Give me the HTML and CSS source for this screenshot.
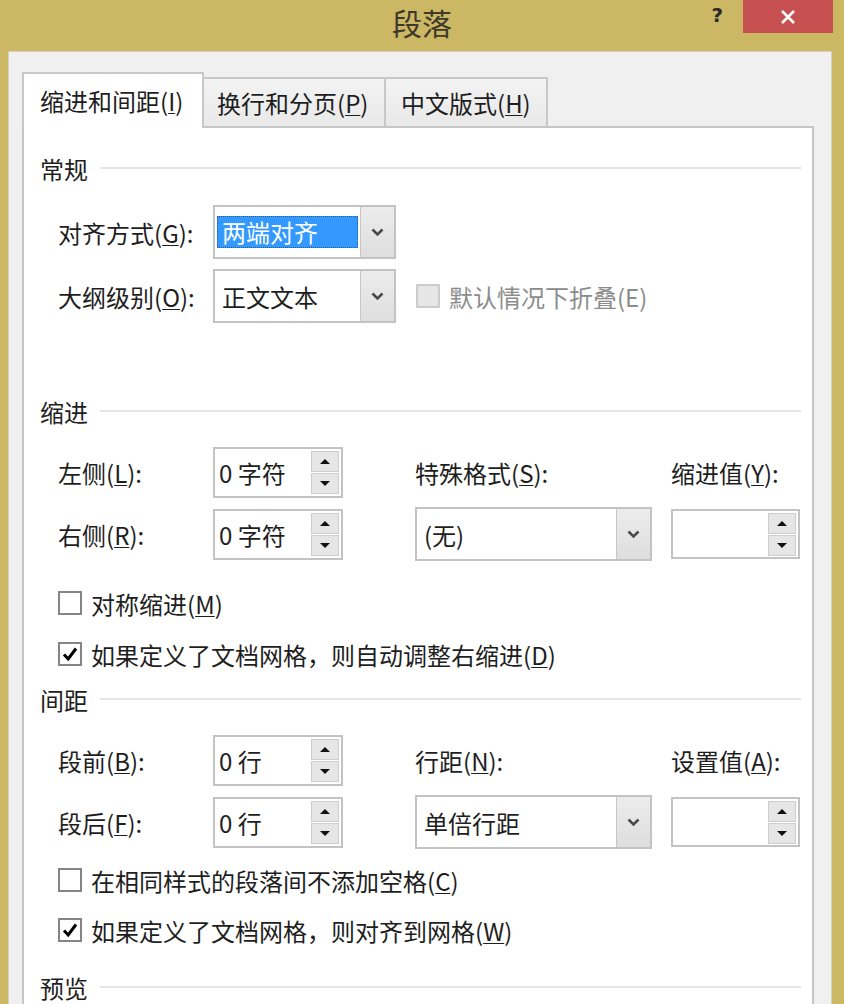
FILE: index.html
```html
<!DOCTYPE html>
<html lang="zh-CN">
<head>
<meta charset="UTF-8" />
<title>段落</title>
<link rel="stylesheet" href="styles.css">
</head>
<body>

  <!-- Title bar -->
  <header class="titlebar">
    <h1 class="title">段落</h1>
    <div class="controls">
      <span class="help">?</span>
      <span class="close">
        <svg width="16" height="16" viewBox="0 0 16 16"><path d="M2 2 L14 14 M14 2 L2 14" stroke="#fff" stroke-width="2.6" fill="none"/></svg>
      </span>
    </div>
  </header>

  <!-- Dialog body -->
  <div class="client">
    <div class="tabs">
      <div class="tab active"><span>缩进和间距(<u>I</u>)</span></div>
      <div class="tab"><span>换行和分页(<u>P</u>)</span></div>
      <div class="tab last"><span>中文版式(<u>H</u>)</span></div>
    </div>

    <div class="panel">
      <!-- 常规 -->
      <div class="group">常规</div>
      <div class="rows general">
        <span class="label">对齐方式(<u>G</u>):</span>
        <div class="select wide">
          <div class="value"><span class="picked">两端对齐</span></div>
          <div class="arrow"><svg width="13" height="9" viewBox="0 0 13 9"><path d="M1.5 1.5 L6.5 6.5 L11.5 1.5" stroke="#4a4a4a" stroke-width="2.6" fill="none"/></svg></div>
        </div>
        <span></span><span></span>

        <span class="label">大纲级别(<u>O</u>):</span>
        <div class="select wide">
          <div class="value">正文文本</div>
          <div class="arrow"><svg width="13" height="9" viewBox="0 0 13 9"><path d="M1.5 1.5 L6.5 6.5 L11.5 1.5" stroke="#4a4a4a" stroke-width="2.6" fill="none"/></svg></div>
        </div>
        <label class="check disabled span2"><span class="box"></span><span>默认情况下折叠(E)</span></label>
      </div>

      <!-- 缩进 -->
      <div class="group gap-indent">缩进</div>
      <div class="rows pair">
        <span class="label">左侧(<u>L</u>):</span>
        <div class="spin">
          <div class="value">0 字符</div>
          <div class="btns"><span class="up"></span><span class="down"></span></div>
        </div>
        <span class="label">特殊格式(<u>S</u>):</span>
        <span class="label">缩进值(<u>Y</u>):</span>

        <span class="label">右侧(<u>R</u>):</span>
        <div class="spin">
          <div class="value">0 字符</div>
          <div class="btns"><span class="up"></span><span class="down"></span></div>
        </div>
        <div class="select mid">
          <div class="value">(无)</div>
          <div class="arrow"><svg width="13" height="9" viewBox="0 0 13 9"><path d="M1.5 1.5 L6.5 6.5 L11.5 1.5" stroke="#4a4a4a" stroke-width="2.6" fill="none"/></svg></div>
        </div>
        <div class="spin small">
          <div class="value"></div>
          <div class="btns"><span class="up"></span><span class="down"></span></div>
        </div>
      </div>
      <div class="checks indent-checks">
        <label class="check"><span class="box"></span><span>对称缩进(<u>M</u>)</span></label>
        <label class="check"><span class="box on"><svg width="18" height="18" viewBox="0 0 18 18"><path d="M3 9.5 L7.2 14 L15 3.5" stroke="#000" stroke-width="3" fill="none"/></svg></span><span>如果定义了文档网格，则自动调整右缩进(<u>D</u>)</span></label>
      </div>

      <!-- 间距 -->
      <div class="group gap-small">间距</div>
      <div class="rows pair">
        <span class="label">段前(<u>B</u>):</span>
        <div class="spin">
          <div class="value">0 行</div>
          <div class="btns"><span class="up"></span><span class="down"></span></div>
        </div>
        <span class="label">行距(<u>N</u>):</span>
        <span class="label">设置值(<u>A</u>):</span>

        <span class="label">段后(<u>F</u>):</span>
        <div class="spin">
          <div class="value">0 行</div>
          <div class="btns"><span class="up"></span><span class="down"></span></div>
        </div>
        <div class="select mid">
          <div class="value">单倍行距</div>
          <div class="arrow"><svg width="13" height="9" viewBox="0 0 13 9"><path d="M1.5 1.5 L6.5 6.5 L11.5 1.5" stroke="#4a4a4a" stroke-width="2.6" fill="none"/></svg></div>
        </div>
        <div class="spin small">
          <div class="value"></div>
          <div class="btns"><span class="up"></span><span class="down"></span></div>
        </div>
      </div>
      <div class="checks spacing-checks">
        <label class="check"><span class="box"></span><span>在相同样式的段落间不添加空格(<u>C</u>)</span></label>
        <label class="check"><span class="box on"><svg width="18" height="18" viewBox="0 0 18 18"><path d="M3 9.5 L7.2 14 L15 3.5" stroke="#000" stroke-width="3" fill="none"/></svg></span><span>如果定义了文档网格，则对齐到网格(<u>W</u>)</span></label>
      </div>

      <!-- 预览 -->
      <div class="group gap-preview">预览</div>
    </div>
  </div>

</body>
</html>
```

FILE: styles.css
```css
/* Window frame */
body {
  margin: 0;
  width: 844px;
  height: 1004px;
  overflow: hidden;
  background: #ccb765;
  font-family: "Noto Sans CJK SC", "Noto Sans", sans-serif;
  color: #1e1e1e;
}
u {
  text-decoration-thickness: 1px;
  text-underline-offset: 2px;
}

/* Title bar */
.titlebar {
  display: grid;
  grid-template-columns: 1fr auto 1fr;
  height: 51px;
}
.title {
  grid-column: 2;
  margin: 0;
  font-size: 30px;
  font-weight: normal;
  line-height: 44px;
  color: #3d3a2b;
}
.controls {
  grid-column: 3;
  justify-self: end;
  display: flex;
  align-items: flex-start;
  gap: 20px;
  padding-right: 11px;
}
.help {
  font: bold 20px "DejaVu Sans", sans-serif;
  line-height: 30px;
  color: #2a2a2a;
}
.close {
  width: 90px;
  height: 33px;
  background: #c75050;
  display: flex;
  align-items: center;
  justify-content: center;
}

/* Client area */
.client {
  margin: 0 12px 0 8px;
  height: 960px;
  background: #f0f0f0;
  border: 1px solid #d6d1bd;
  border-bottom: none;
  padding: 20px 17px 0 13px;
}

/* Tabs */
.tabs {
  display: flex;
  align-items: flex-end;
}
.tab {
  height: 49px;
  box-sizing: border-box;
  display: flex;
  align-items: center;
  padding: 0 0 0 13px;
  font-size: 24px;
  white-space: nowrap;
  background: linear-gradient(#f3f3f3, #e9e9e9);
  border: 2px solid #c8c8c8;
  border-bottom: none;
  border-left: none;
}
.tab.active {
  height: 56px;
  width: 182px;
  margin-bottom: -2px;
  padding: 0 0 2px 16px;
  background: #fff;
  border-left: 2px solid #c8c8c8;
  position: relative;
  z-index: 1;
}
.tab:nth-child(2) { width: 182px; }
.tab.last { width: 162px; padding-left: 15px; }

.panel {
  height: 900px;
  background: #fff;
  border: 2px solid #c6c6c6;
  padding: 26px 11px 0 16px;
}

/* Group headings with rule */
.group {
  display: flex;
  align-items: center;
  gap: 12px;
  height: 28px;
  font-size: 24px;
}
.group::after {
  content: "";
  flex: 1;
  height: 2px;
  background: #e4e4e4;
}
.gap-indent { margin-top: 74px; }
.gap-small { margin-top: 6px; }
.gap-preview { margin-top: 18px; }

/* Form rows */
.rows {
  display: grid;
  grid-template-columns: 155px 202px 256px 129px;
  align-items: center;
  padding-left: 18px;
  font-size: 24px;
  white-space: nowrap;
}
.general {
  margin-top: 23px;
  grid-auto-rows: 54px;
  row-gap: 10px;
}
.pair {
  margin-top: 21px;
  grid-template-rows: 52px 54px;
  row-gap: 9px;
}
.span2 { grid-column: span 2; }

/* Drop-down */
.select {
  height: 54px;
  box-sizing: border-box;
  border: 2px solid #c3c3c3;
  display: flex;
  background: #fff;
}
.select.wide { width: 183px; }
.select.mid { width: 237px; }
.select .value {
  flex: 1;
  display: flex;
  align-items: center;
  padding-left: 7px;
}
.picked {
  align-self: center;
  margin-left: -5px;
  width: 141px;
  height: 32px;
  box-sizing: border-box;
  padding-left: 4px;
  line-height: 30px;
  background: #3399ff;
  color: #fff;
  border: 1px dotted #2a5a8c;
}
.select .arrow {
  width: 33px;
  background: linear-gradient(#ececec, #dedede);
  border-left: 1px solid #c6c6c6;
  display: flex;
  align-items: center;
  justify-content: center;
}

/* Spin box */
.spin {
  width: 130px;
  height: 51px;
  box-sizing: border-box;
  border: 2px solid #c3c3c3;
  display: flex;
  align-items: center;
  background: #fff;
}
.spin.small {
  width: 129px;
  height: 50px;
}
.spin .value {
  flex: 1;
  padding-left: 4px;
}
.btns {
  display: flex;
  flex-direction: column;
  gap: 1px;
  margin-right: 2px;
}
.btns span {
  width: 28px;
  height: 21px;
  box-sizing: border-box;
  background: #e6e6e6;
  border: 1px solid #cdcdcd;
  display: flex;
  align-items: center;
  justify-content: center;
}
.btns .up::before {
  content: "";
  border: 5px solid transparent;
  border-top: none;
  border-bottom: 5px solid #111;
}
.btns .down::before {
  content: "";
  border: 5px solid transparent;
  border-bottom: none;
  border-top: 5px solid #111;
}

/* Check boxes */
.checks {
  display: flex;
  flex-direction: column;
  padding-left: 18px;
  white-space: nowrap;
}
.indent-checks { margin-top: 17px; gap: 1px; }
.spacing-checks { margin-top: 6px; }
.check {
  display: flex;
  align-items: center;
  gap: 9px;
  height: 50px;
  font-size: 24px;
}
.box {
  width: 24px;
  height: 24px;
  box-sizing: border-box;
  border: 2px solid #858585;
  background: #fff;
  display: flex;
  align-items: center;
  justify-content: center;
}
.check.disabled {
  color: #8c8c8c;
  padding-left: 1px;
}
.check.disabled .box {
  background: #e6e6e6;
  border-color: #cccccc;
}
```
